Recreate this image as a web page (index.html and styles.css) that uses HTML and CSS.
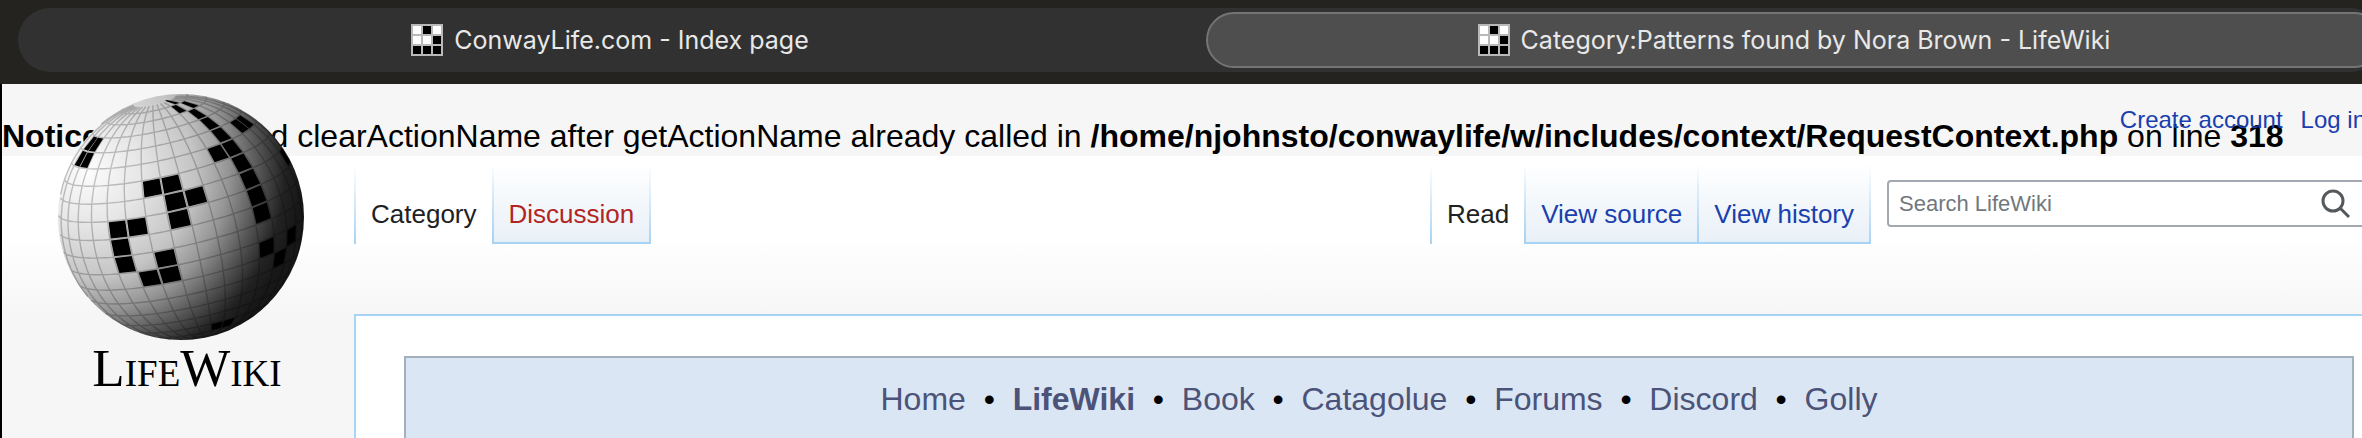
FILE: index.html
```html
<!DOCTYPE html>
<html lang="en">
<head>
<meta charset="utf-8">
<title>Category:Patterns found by Nora Brown - LifeWiki</title>
<meta name="viewport" content="width=device-width,initial-scale=1">
<link rel="stylesheet" href="styles.css">
</head>

<body>
<!-- shared favicon -->
<svg width="0" height="0" class="defs" aria-hidden="true">
  <symbol id="favicon" viewBox="0 0 32 32">
    <rect width="32" height="32" fill="#b9b9b9"/>
    <path fill="#fff" d="M2 2h8v8H2zM22 2h8v8h-8zM2 12h8v8H2zM12 12h8v8h-8z"/>
    <path fill="#000" d="M12 2h8v8h-8zM22 12h8v8h-8zM2 22h8v8H2zM12 22h8v8h-8zM22 22h8v8h-8z"/>
  </symbol>
</svg>

<nav class="tabbar">
  <div class="track">
    <a class="tab" href="#"><svg class="favicon"><use href="#favicon"/></svg>ConwayLife.com - Index page</a>
    <a class="tab active" href="#"><svg class="favicon"><use href="#favicon"/></svg>Category:Patterns found by Nora Brown - LifeWiki</a>
  </div>
</nav>

<div class="page">
  <div class="notice"><br><b>Notice</b>: Unexpected clearActionName after getActionName already called in <b>/home/njohnsto/conwaylife/w/includes/context/RequestContext.php</b> on line <b>318</b></div>

  <a class="logo" href="#">
    <svg id="globe" viewBox="-125 -125 250 250" role="img" aria-label="Globe">
      <defs>
        <radialGradient id="shade" gradientUnits="userSpaceOnUse" cx="-94" cy="-46" r="215">
          <stop offset="0" stop-color="#fdfdfd"/>
          <stop offset=".25" stop-color="#e6e6e6"/>
          <stop offset=".5" stop-color="#c4c4c4"/>
          <stop offset=".66" stop-color="#949494"/>
          <stop offset=".8" stop-color="#555"/>
          <stop offset=".92" stop-color="#222"/>
          <stop offset="1" stop-color="#171717"/>
        </radialGradient>
      </defs>
      <circle r="123" fill="url(#shade)"/>
    </svg>
    <span class="wordmark">LifeWiki</span>
  </a>

  <div class="personal">
    <a href="#">Create account</a>
    <a href="#">Log in</a>
  </div>

  <header class="head">
    <ul class="tabs">
      <li class="selected"><a href="#">Category</a></li>
      <li><a class="new" href="#">Discussion</a></li>
    </ul>
    <ul class="tabs views">
      <li class="selected"><a href="#">Read</a></li>
      <li><a href="#">View source</a></li>
      <li><a href="#">View history</a></li>
    </ul>
    <form class="search">
      <input type="search" placeholder="Search LifeWiki" aria-label="Search LifeWiki">
      <button type="button" aria-label="Search">
        <svg viewBox="0 0 30 30"><circle cx="12" cy="12" r="10"/><path d="M19 19l9 9"/></svg>
      </button>
    </form>
  </header>

  <main class="content">
    <div class="sitenav">
      <a href="#">Home</a>&nbsp; • &nbsp;<a href="#"><b>LifeWiki</b></a>&nbsp; • &nbsp;<a href="#">Book</a>&nbsp; • &nbsp;<a href="#">Catagolue</a>&nbsp; • &nbsp;<a href="#">Forums</a>&nbsp; • &nbsp;<a href="#">Discord</a>&nbsp; • &nbsp;<a href="#">Golly</a>
    </div>
  </main>
</div>

<script src="globe.js"></script>
</body>
</html>
```
FILE: styles.css
```css
*,*::before,*::after{box-sizing:border-box}
body{margin:0;overflow:hidden;background:#f6f6f6;
     font-family:"Liberation Sans",Arial,Helvetica,sans-serif}
a{color:#1a3fae;text-decoration:none}
.defs{position:absolute}

/* browser tabs; the window runs a little past the right edge */
.tabbar{margin-right:-40px;padding:8px 20px 12px 18px;background:#242320}
.track{display:flex;gap:8px;height:64px;padding:4px 0 4px 4px;border-radius:32px;background:#313131}
.tab{flex:1 1 0;display:flex;align-items:center;justify-content:center;gap:11px;
     border:2px solid transparent;border-radius:28px;
     font-family:Inter,sans-serif;font-size:25px;color:#e8e8e8}
.tab.active{background:#4e4e4e;border-color:#747474}
.favicon{width:32px;height:32px}

/* page */
.page{position:relative;margin-right:-40px;border-left:2px solid #000;background:#f6f6f6}
.notice{padding-bottom:2px;font-size:32px;line-height:35px;color:#000;white-space:nowrap}

.logo{position:absolute;left:54px;top:8px;width:250px;z-index:2;
      text-align:center;color:#000}
#globe{display:block;width:250px;height:250px}
.wordmark{display:block;padding-left:12px;
          font-family:"Liberation Serif","Times New Roman",serif;
          font-size:53px;line-height:52px;font-variant:small-caps}

.personal{position:absolute;top:22px;right:36px;display:flex;gap:18px;
          font-size:24px;line-height:28px}

/* header row */
.head{display:flex;align-items:flex-start;height:158px;padding:8px 36px 0 352px;
      background:linear-gradient(#fff 50%,#f6f6f6 100%)}
.tabs{display:flex;margin:0;padding:0 2px 0 0;list-style:none;
      background:linear-gradient(rgba(167,215,249,0),#a7d3f5) right/2px 100% no-repeat}
.tabs li{height:80px;padding:35px 15px 0 17px;border-bottom:2px solid #a7d3f5;
         font-size:26px;line-height:30px;white-space:nowrap;
         background:linear-gradient(rgba(167,215,249,0),#a7d3f5) left/2px 100% no-repeat,
                    linear-gradient(#fff,#e8f0f7)}
.tabs .selected{border-bottom:0;
         background:linear-gradient(rgba(167,215,249,0),#a7d3f5) left/2px 100% no-repeat,#fff}
.tabs .selected a{color:#202122}
.tabs .new{color:#b32424}
.views{margin-left:auto}

.search{display:flex;align-items:center;width:479px;height:47px;margin:16px 0 0 16px;
        border:2px solid #a2a9b1;border-radius:4px;background:#fff}
.search input{flex:1;min-width:0;padding:0 10px;border:0;outline:0;background:none;
              font:22px "Liberation Sans",Arial,sans-serif;color:#202122}
.search input::placeholder{color:#72777d;opacity:1}
.search button{width:56px;height:100%;padding:0;border:0;background:none}
.search svg{display:block;width:30px;height:30px;margin:0 auto;
            fill:none;stroke:#54595d;stroke-width:3}

/* content */
.content{margin-left:352px;padding:40px 48px;border:solid #a7d3f5;
         border-width:2px 0 0 2px;background:#fff}
.sitenav{padding:23px 0;border:2px solid #a2afbd;background:#dbe6f4;
         font-size:32px;line-height:36px;text-align:center;color:#000}
.sitenav a{color:#4b5379}
```
FILE: globe.js
```js
/* Logo globe: grid and live cells on a tilted sphere */
const NS = 'http://www.w3.org/2000/svg';
const R = 123;
const TILT = 12.9 * Math.PI / 180;  // pole leans left
const TIP = 10.8 * Math.PI / 180;   // pole leans towards the viewer
const COL = 10.4, ROW = 8.5;        // cell size in degrees

function project(lon, lat) {
  const l = lon * Math.PI / 180, p = lat * Math.PI / 180;
  const u = Math.cos(p) * Math.sin(l), w = Math.cos(p) * Math.cos(l), y = Math.sin(p);
  const v = y * Math.cos(TIP) - w * Math.sin(TIP);
  return {
    x: R * (u * Math.cos(TILT) - v * Math.sin(TILT)),
    y: -R * (u * Math.sin(TILT) + v * Math.cos(TILT)),
    z: w * Math.cos(TIP) + y * Math.sin(TIP)
  };
}
const lonOf = c => -11.4 + COL * c;
const latOf = r => 27 - ROW * r;

function add(d, attrs) {
  const el = document.createElementNS(NS, 'path');
  el.setAttribute('d', d);
  for (const k in attrs) el.setAttribute(k, attrs[k]);
  document.getElementById('globe').appendChild(el);
}

/* visible part of a line of points */
function line(points) {
  let d = '', pen = false;
  for (const p of points) {
    if (p.z < .08) { pen = false; continue; }
    d += (pen ? 'L' : 'M') + p.x.toFixed(1) + ' ' + p.y.toFixed(1);
    pen = true;
  }
  return d;
}

let grid = '';
for (let c = -8; c <= 10; c++) {
  const pts = [];
  for (let lat = -80; lat <= 80; lat += 2) pts.push(project(lonOf(c - .5), lat));
  grid += line(pts);
}
for (let r = -5; r <= 13; r++) {
  const pts = [];
  for (let lon = -180; lon <= 180; lon += 3) pts.push(project(lon, latOf(r - .5)));
  grid += line(pts);
}
add(grid, { fill: 'none', stroke: '#000', 'stroke-opacity': .22, 'stroke-width': 1.4 });

/* live cells as [column, row] */
const cells = [
  [0,0],[1,0],[1,1],[2,1],[1,2],
  [-2,2],[-1,2],[-2,3],[-2,4],[0,4],[-1,5],[0,5],
  [5,3],[5,2],[5,1],[5,0],[5,-1],[4,-1],[5,-2],[5,-3],[5,-4],
  [6,-5],[4,-5],[5,-6],
  [7,-2],[8,-2],[-5,-3],[-6,-3],[-5,-2],[-6,-2],
  [5,5],[7,5],[6,6],[9,1],[9,2],[3,10],[2,10]
];
let live = '';
for (const [c, r] of cells) {
  const a = .45;
  const corners = [[-a,-a],[a,-a],[a,a],[-a,a]].map(([i, j]) => project(lonOf(c + i), latOf(r + j)));
  live += line(corners) + 'Z';
}
add(live, { fill: '#000' });
```
